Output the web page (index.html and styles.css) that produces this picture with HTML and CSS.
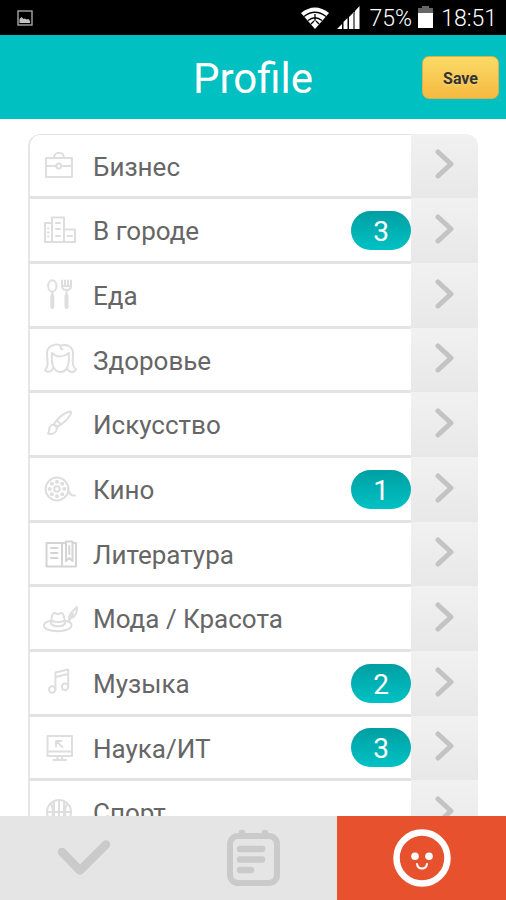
FILE: index.html
```html
<!DOCTYPE html>
<html lang="ru">
<head>
<meta charset="utf-8">
<meta name="viewport" content="width=device-width, initial-scale=1">
<title>Profile</title>
<link rel="stylesheet" href="styles.css">
</head>
<body>
<div class="status">
  <svg class="status-note" width="16" height="16" viewBox="0 0 16 16"><rect x="1" y="1" width="14" height="14" fill="none" stroke="#a5a5a5" stroke-width="1.4"/><path d="M2.500 13V9l2-2 2 2 1.500-.5 1.500 1 2-.5 1.500 2v2z" fill="#c4c4c4"/></svg>
  <svg width="28" height="22" viewBox="0 0 28 22"><path d="M0 6Q14-5 28 6L14 22Z" fill="#fff"/><path d="M3 9.500Q14 1 25 9.500M7 13.500Q14 8 21 13.500M10 17l3-3M18 17l-3-3M14 7v7" fill="none" stroke="#000" stroke-width="1.300"/></svg>
  <svg class="status-signal" width="23" height="23" viewBox="0 0 23 23"><path d="M0 23 5 18v5zM6.500 23v-7l4-4v11zM12 23V11l4-4v16z" fill="#fff"/><path d="M18 23V5l4.500-5v23z" fill="#fff"/><path d="M17 6v17" stroke="#777" stroke-width="2"/></svg>
  <span class="status-battery">75%</span>
  <svg width="15" height="23" viewBox="0 0 15 23"><path d="M0 2h4V0h7v2h4v6H0z" fill="#666"/><path d="M0 7h15v15H0z" fill="#fff"/></svg>
  <span class="status-time">18:51</span>
</div>
<header class="header">
  <h1 class="title">Profile</h1>
  <button class="save" type="button">Save</button>
</header>
<main class="content">
  <ul class="list">
    <li><a class="row" href="#business"><span class="cell"><svg class="icon" viewBox="0 0 36 36"><path d="M4 10h26v19H4zM4 18h10M19.500 18H30M12 10c0-7 10-7 10 0"/><circle cx="16.800" cy="18" r="2.500"/></svg><span class="name">Бизнес</span></span><span class="go"><svg class="arrow" viewBox="0 0 24 34"><path d="m5 3 13 12L5 27"/></svg></span></a></li>
    <li><a class="row" href="#city"><span class="cell"><svg class="icon" viewBox="0 0 36 36"><path d="M10 30H3V11h7M10 30V5.500h12V30zM22 17.500h11V30H22M14 11h4M14 17h4M14 24h4M25.500 24H30M6 16.500h.5M6 20.500h.5M6 24.500h.5"/></svg><span class="name">В городе</span><span class="badge">3</span></span><span class="go"><svg class="arrow" viewBox="0 0 24 34"><path d="m5 3 13 12L5 27"/></svg></span></a></li>
    <li><a class="row" href="#food"><span class="cell"><svg class="icon" viewBox="0 0 36 36"><ellipse cx="10.300" cy="9" rx="4.200" ry="5.700"/><path d="M10.300 15v3M20 3.500V9q0 4 4.500 4T29 9V3.500M23 3.500V9h3V3.500M20 9h9M24.500 13v4"/><path d="M10.300 19v11M24.500 19v11" stroke-width="4"/></svg><span class="name">Еда</span></span><span class="go"><svg class="arrow" viewBox="0 0 24 34"><path d="m5 3 13 12L5 27"/></svg></span></a></li>
    <li><a class="row" href="#health"><span class="cell"><svg class="icon" viewBox="0 0 36 36"><path d="M19 3.500C13 1 4 4 5 13c1 9 1 12-2 15 2 3 7 2 8-2M19 3.500c8-2 13 3 12 10-1 8 0 12 3 14-2 4-7 3-9-1M10 11c-1 10 1 19 8.500 19S28 20 26.500 11M10 11c5 5 12 4 17 0M18.500 4c0 2 0 3 2 3.500"/></svg><span class="name">Здоровье</span></span><span class="go"><svg class="arrow" viewBox="0 0 24 34"><path d="m5 3 13 12L5 27"/></svg></span></a></li>
    <li><a class="row" href="#art"><span class="cell"><svg class="icon" viewBox="0 0 36 36"><path d="M6 27.500c2-2 0-6 3-8s7 1 5.500 5S8 28.500 6 27.500zM12 18c4-6 9-11 16-12.500 1.500 0 1 2 .5 3-3 5-7 9-13 12zM15 14.500l4 4"/></svg><span class="name">Искусство</span></span><span class="go"><svg class="arrow" viewBox="0 0 24 34"><path d="m5 3 13 12L5 27"/></svg></span></a></li>
    <li><a class="row" href="#cinema"><span class="cell"><svg class="icon" viewBox="0 0 36 36"><circle cx="15" cy="18" r="11.400"/><circle cx="15" cy="18" r="2.800"/><path d="M26 18c1 5 3 7 7 6.500"/><path class="dots" d="M15 10.700h0M15 25.300h0M7.700 18h0M22.300 18h0M9.800 12.800h0M20.200 12.800h0M9.800 23.200h0M20.200 23.200h0"/></svg><span class="name">Кино</span><span class="badge">1</span></span><span class="go"><svg class="arrow" viewBox="0 0 24 34"><path d="m5 3 13 12L5 27"/></svg></span></a></li>
    <li><a class="row" href="#books"><span class="cell"><svg class="icon icon-dark" viewBox="0 0 36 36"><path d="M24 7H4.500v23.500H34V7h-3M20 7v23.500M24 5.500h6.500V25l-3.200-3-3.300 3zM27.300 10v8M9 12h6.500M9 17h6.500M9 22h6.500"/></svg><span class="name">Литература</span></span><span class="go"><svg class="arrow" viewBox="0 0 24 34"><path d="m5 3 13 12L5 27"/></svg></span></a></li>
    <li><a class="row" href="#fashion"><span class="cell"><svg class="icon" viewBox="0 0 36 36"><path d="M9 21c-4 0-7 2-7 4.500C2 33 29 33 29.500 25.500c0-3-3-4.500-6.500-4.500M9 24c0-4 1-11 3.500-11s2 2 4 1 4-2 5 1 1.500 6 1.500 9c-3 3-11 3-14 0zM9 20.500c4 2 10 2 14 0M27 21c-1-7 4-10 8-14 0 6-1 10-6 11M27 21l4-7"/></svg><span class="name">Мода / Красота</span></span><span class="go"><svg class="arrow" viewBox="0 0 24 34"><path d="m5 3 13 12L5 27"/></svg></span></a></li>
    <li><a class="row" href="#music"><span class="cell"><svg class="icon" viewBox="0 0 36 36"><circle cx="10.200" cy="24.500" r="3.200"/><circle cx="23" cy="21.700" r="3.200"/><path d="M13.400 24.500V7.500l12.800-3v17.200M13.400 12l12.800-3"/></svg><span class="name">Музыка</span><span class="badge">2</span></span><span class="go"><svg class="arrow" viewBox="0 0 24 34"><path d="m5 3 13 12L5 27"/></svg></span></a></li>
    <li><a class="row" href="#science"><span class="cell"><svg class="icon" viewBox="0 0 36 36"><path d="M5.500 6H30v20H5.500zM5.500 21.500H30M15.500 26v4M20 26v4M11.500 30H24M14 16.500V11h5.500M14.500 11.500 20.500 17"/></svg><span class="name">Наука/ИТ</span><span class="badge">3</span></span><span class="go"><svg class="arrow" viewBox="0 0 24 34"><path d="m5 3 13 12L5 27"/></svg></span></a></li>
    <li><a class="row" href="#sport"><span class="cell"><svg class="icon" viewBox="0 0 36 36"><circle cx="17" cy="18" r="12"/><path d="M17 6v24M5 18h24M9 9.500q4 8 0 17M25 9.500q-4 8 0 17M12 7v22M22 7v22"/></svg><span class="name">Спорт</span></span><span class="go"><svg class="arrow" viewBox="0 0 24 34"><path d="m5 3 13 12L5 27"/></svg></span></a></li>
  </ul>
</main>
<nav class="tabs">
  <a class="tab" href="#done" aria-label="Done"><svg width="60" height="60" viewBox="0 0 60 60"><path d="m8 24 18 18.500L52 16.500" fill="none" stroke="#cacaca" stroke-width="8.500" stroke-linecap="round" stroke-linejoin="round"/></svg></a>
  <a class="tab" href="#notes" aria-label="Notes"><svg width="60" height="60" viewBox="0 0 60 60"><rect x="7" y="8" width="47" height="47" rx="8" fill="none" stroke="#cacaca" stroke-width="6"/><path d="M19 5v2M42 5v2M17 21h22M17 31.500h22M17 42h11" fill="none" stroke="#cacaca" stroke-width="6.500" stroke-linecap="round"/></svg></a>
  <a class="tab tab-active" href="#profile" aria-label="Profile"><svg width="60" height="60" viewBox="0 0 60 60"><circle cx="30" cy="30" r="25.500" fill="none" stroke="#fff" stroke-width="6.500"/><circle cx="23" cy="28.300" r="3.800" fill="#fff"/><circle cx="37" cy="28.300" r="3.800" fill="#fff"/><path d="M25 36c1 6 9 6 10 0" fill="none" stroke="#fff" stroke-width="2" stroke-linecap="round"/></svg></a>
</nav>
</body>
</html>
```
FILE: styles.css
```css
* {
  box-sizing: border-box;
}

body {
  display: flex;
  flex-direction: column;
  height: 100vh;
  margin: 0;
  background: #fff;
  color: #666;
  font-family: Roboto, "Noto Sans", sans-serif;
}

svg {
  display: block;
  flex: none;
}

.status {
  display: flex;
  flex: none;
  align-items: center;
  gap: 8px;
  height: 35px;
  padding: 0 9px 0 17px;
  background: #000;
  color: #fff;
  font-size: 23px;
  font-weight: 300;
  line-height: 35px;
}

.status-note {
  margin-right: auto;
}

.status-battery {
  margin: 2px -2px 0 2px;
}

.status-time {
  padding-top: 2px;
}

.header {
  display: grid;
  flex: none;
  grid-template-columns: 1fr auto 1fr;
  align-items: center;
  height: 84px;
  padding: 0 7px;
  background: #00c0c2;
}

.title {
  grid-column: 2;
  margin: 0;
  padding-top: 4px;
  color: #fff;
  font-size: 42px;
  font-weight: 400;
  line-height: 80px;
}

.save {
  justify-self: end;
  width: 77px;
  height: 43px;
  padding: 3px 0 0;
  border: 1px solid #dcb048;
  border-radius: 7px;
  background: linear-gradient(#f9db66, #f6b941);
  color: #333;
  font: 700 16px/24px Roboto, sans-serif;
  text-shadow: 0 2px 2px #fff3;
}

.content {
  flex: 1;
  min-height: 0;
  padding: 15px 28px;
  overflow: auto;
  scrollbar-width: none;
}

.list {
  margin: 0;
  padding: 0;
  overflow: hidden;
  border-radius: 12px;
  list-style: none;
}

.row {
  display: flex;
  height: 65px;
  color: inherit;
  text-decoration: none;
}

li:nth-child(3n + 1) .row {
  height: 64px;
}

.cell {
  display: flex;
  flex: 1;
  align-items: center;
  border-left: 2px solid #e6e6e6;
  border-top: 1px solid #e3e3e3;
  border-bottom: 2px solid #e3e3e3;
  padding-left: 12px;
}

li:first-child .cell {
  border-top-left-radius: 12px;
}

.icon {
  width: 36px;
  height: 36px;
  fill: none;
  stroke: #dedede;
  stroke-width: 2;
  stroke-linecap: round;
  stroke-linejoin: round;
}

.icon-dark {
  stroke: #d4d4d4;
}

.dots {
  stroke-width: 4;
}

.name {
  flex: 1;
  margin-left: 15px;
  padding-top: 2px;
  font-size: 26px;
  line-height: 32px;
}

.badge {
  width: 60px;
  height: 39px;
  border-radius: 20px;
  background: linear-gradient(#009fa2, #00c2c4);
  color: #fff;
  font-size: 28px;
  font-weight: 400;
  line-height: 42px;
  text-align: center;
}

.go {
  display: flex;
  flex: none;
  align-items: center;
  justify-content: center;
  width: 67px;
  background: linear-gradient(#f1f1f1, #e8e8e8);
}

.arrow {
  width: 24px;
  height: 34px;
  fill: none;
  stroke: #c3c3c3;
  stroke-width: 5;
  stroke-linecap: round;
  stroke-linejoin: round;
}

.tabs {
  display: grid;
  flex: none;
  grid-template-columns: repeat(3, 1fr);
  height: 84px;
  background: #e5e5e5;
}

.tab {
  display: flex;
  align-items: center;
  justify-content: center;
}

.tab-active {
  background: #e8512e;
}
```
